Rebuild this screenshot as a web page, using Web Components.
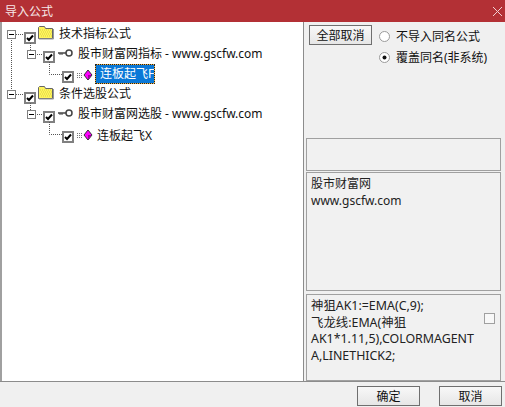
<!DOCTYPE html>
<html>
<head>
<meta charset="utf-8">
<style>
    html, body {
        margin: 0;
        background: #f0f0f0;
    }
    body {
        font: 12px "Noto Sans", "Noto Sans CJK SC", sans-serif;
        color: #111;
    }
</style>
</head>
<body>

<template id="import-dialog-temp">
    <style>
        :host {
            display: flex;
            flex-direction: column;
            width: 505px;
            height: 407px;
            overflow: hidden;
            background: #f0f0f0;
        }

        #main {
            display: flex;
            height: 359px;
            border-bottom: 1px solid #8c8c8c;
        }

        #tree {
            width: 301px;
            box-sizing: content-box;
            padding-top: 5px;
            background: #fff;
            border-left: 2px solid #a0a0a0;
            border-right: 1px solid #8c8c8c;
            overflow: hidden;
        }

        #side {
            display: flex;
            flex-direction: column;
            width: 195px;
            margin-left: 2px;
        }

        #options {
            display: flex;
            gap: 7px;
            height: 113px;
            padding: 3px 0 0 3px;
        }

        #radios {
            display: flex;
            flex-direction: column;
            margin-top: 1px;
            gap: 1px;
        }

        #footer {
            display: flex;
            gap: 19px;
            padding: 4px 0 0 357px;
        }
    </style>
    <window-title>导入公式</window-title>
    <div id="main">
        <div id="tree"><slot name="tree"></slot></div>
        <div id="side">
            <div id="options">
                <win-button>全部取消</win-button>
                <div id="radios">
                    <win-radio>不导入同名公式</win-radio>
                    <win-radio checked>覆盖同名(非系统)</win-radio>
                </div>
            </div>
            <slot name="side"></slot>
        </div>
    </div>
    <div id="footer">
        <win-button>确定</win-button>
        <win-button>取消</win-button>
    </div>
</template>

<template id="window-title-temp">
    <style>
        :host {
            display: flex;
            align-items: center;
            justify-content: space-between;
            flex: none;
            height: 22px;
            padding: 0 1px 0 5px;
            background: #b33035;
            color: #f6e8e8;
        }

        svg {
            display: block;
        }
    </style>
    <slot></slot>
    <svg width="13" height="13" viewBox="0 0 13 13">
        <path d="M3.500 .5 L12.500 9.500 M12.500 .5 L3.500 9.500" transform="translate(-1.500 1.500)" stroke="#f0d0d2" fill="none"/>
    </svg>
</template>

<template id="win-button-temp">
    <style>
        :host {
            display: flex;
            align-items: center;
            justify-content: center;
            box-sizing: border-box;
            width: 63px;
            height: 20px;
            border: 1px solid #6f6f6f;
            background: linear-gradient(#f8f8f8, #e6e6e6);
            color: #111;
        }
    </style>
    <slot></slot>
</template>

<template id="win-radio-temp">
    <style>
        :host {
            display: flex;
            align-items: center;
            gap: 6px;
            height: 20px;
        }

        svg {
            display: block;
            flex: none;
        }
    </style>
    <svg width="11" height="11" viewBox="0 0 11 11">
        <circle cx="5.500" cy="5.500" r="5" fill="#fff" stroke="#9a9a9a"/>
        <circle id="dot" cx="5.500" cy="5.500" r="2" fill="#111"/>
    </svg>
    <slot></slot>
</template>

<template id="text-panel-temp">
    <style>
        :host {
            display: flex;
            justify-content: space-between;
            box-sizing: border-box;
            border: 1px solid #a0a0a0;
            padding: 3px 4px;
            line-height: 16.5px;
            background: #f1f1f1;
            color: #222;
        }

        :host([box]) {
            font-size: 12.4px;
        }

        #scroll {
            flex: none;
            align-self: flex-start;
            width: 9px;
            height: 9px;
            margin: 15px 1px 0 0;
            border: 1px solid #a0a0a0;
            background: #f8f8f8;
        }

        :host(:not([box])) #scroll {
            display: none;
        }
    </style>
    <div><slot></slot></div>
    <div id="scroll"></div>
</template>

<script>
    function attachTemplate(host, id) {
        let root = host.attachShadow({ mode: 'open' });
        root.appendChild(document.querySelector(id).content.cloneNode(true));
        return root;
    }

    class IMPORT_DIALOG extends HTMLElement {
        constructor() {
            super();
            attachTemplate(this, '#import-dialog-temp');
        }
    }

    class WINDOW_TITLE extends HTMLElement {
        constructor() {
            super();
            attachTemplate(this, '#window-title-temp');
        }
    }

    class WIN_BUTTON extends HTMLElement {
        constructor() {
            super();
            attachTemplate(this, '#win-button-temp');
        }
    }

    class WIN_RADIO extends HTMLElement {
        constructor() {
            super();
            attachTemplate(this, '#win-radio-temp');
        }
        connectedCallback() {
            this.shadowRoot.querySelector('#dot').style.display = this.hasAttribute('checked') ? '' : 'none';
        }
    }

    class TEXT_PANEL extends HTMLElement {
        constructor() {
            super();
            attachTemplate(this, '#text-panel-temp');
        }
    }

    // gutter of a row: connectors, expander, checkbox and icon, in row coordinates
    const DOT = 'stroke="#555" stroke-dasharray="1 1" fill="none"';

    function expander(x) {
        return `<rect x="${x + .5}" y="3.500" width="8" height="8" fill="#fff" stroke="#808080"/>
                <path d="M${x + 2} 7.500h5" stroke="#000"/>`;
    }

    function checkbox(x, y) {
        return `<rect x="${x + 1}" y="${y + 1}" width="10" height="10" fill="#fff" stroke="#808080" stroke-width="2"/>
                <path d="M${x + 3} ${y + 6}l2 2 4-4.500" stroke="#000" stroke-width="2" fill="none"/>`;
    }

    const ICONS = {
        folder: x => `<path d="M${x + .5} 11.500v-11l1-1h5l1 2h7v10z" fill="#fff45c" stroke="#666"/>
                      <path d="M${x + 2} 3h12M${x + 3} 5h11M${x + 2} 7h12M${x + 3} 9h11" stroke="#d8cf45" stroke-dasharray="1 1"/>
                      <path d="M${x + 15.500} 2v10H${x + 1}" stroke="#999" fill="none"/>`,
        key: x => `<path d="M${x} 6h8" stroke="#444" stroke-width="1.500"/>
                   <path d="M${x + 2} 6v2M${x + 4} 6v2" stroke="#444"/>
                   <circle cx="${x + 11}" cy="6" r="3" fill="#fff" stroke="#444" stroke-width="1.500"/>`,
        formula: x => `<path d="M${x} 6.500h6M${x} 8.500h6M${x} 10.500h6" stroke="#777" stroke-dasharray="1 1"/>
                       <path d="M${x + 11} 3l4 5-4 5-4-5z" fill="#f0f" stroke="#333"/>
                       <path d="M${x + 11} 8l3.500 0-3.500 4.500z" fill="#a000a0"/>`
    };

    const LEVELS = {
        0: {
            width: 59, icon: 'folder', iconX: 38, textTop: 0,
            gutter: last => `<path d="M11.500 11v${last ? 0 : 52}M16 7.500h8" ${DOT}/>${expander(7)}${checkbox(24, 5)}`
        },
        1: {
            width: 78, icon: 'key', iconX: 58, textTop: 0,
            gutter: () => `<path d="M30.500 -4v8M35 7.500h8" ${DOT}/>${expander(27)}${checkbox(43, 4)}`
        },
        2: {
            width: 97, icon: 'formula', iconX: 77, textTop: 2,
            gutter: () => `<path d="M49.500 -5v12.500h13" ${DOT}/>${checkbox(62, 4)}`
        }
    };

    class TREE_ROW extends HTMLElement {
        connectedCallback() {
            if (this.shadowRoot) return;
            let lv = LEVELS[this.getAttribute('level')];
            let root = this.attachShadow({ mode: 'open' });
            root.innerHTML = `
                <style>
                    :host {
                        display: flex;
                        height: 20px;
                        line-height: 15px;
                        margin-left: -2px;
                    }
                    svg {
                        display: block;
                        flex: none;
                        overflow: visible;
                    }
                    #text {
                        margin-top: ${lv.textTop - 1}px;
                        white-space: nowrap;
                        height: 16px;
                    }
                    :host([selected]) #text {
                        box-sizing: border-box;
                        height: 20px;
                        margin: -3px 0 0 -2px;
                        padding: 2px 1px 0 5px;
                        line-height: 16px;
                        background: #0a78d7;
                        color: #fff;
                        box-shadow: inset 0 0 0 1px #f0b040;
                        outline: 1px dotted #222;
                        outline-offset: -1px;
                    }
                </style>
                <svg width="${lv.width}" height="20">${lv.gutter(this.hasAttribute('last'))}${ICONS[lv.icon](lv.iconX)}</svg>
                <div id="text"><slot></slot></div>`;
        }
    }

    customElements.define('window-title', WINDOW_TITLE);
    customElements.define('win-button', WIN_BUTTON);
    customElements.define('win-radio', WIN_RADIO);
    customElements.define('text-panel', TEXT_PANEL);
    customElements.define('tree-row', TREE_ROW);
    customElements.define('import-dialog', IMPORT_DIALOG);
</script>

<import-dialog>
    <tree-row slot="tree" level="0">技术指标公式</tree-row>
    <tree-row slot="tree" level="1">股市财富网指标 - www.gscfw.com</tree-row>
    <tree-row slot="tree" level="2" selected>连板起飞F</tree-row>
    <tree-row slot="tree" level="0" last>条件选股公式</tree-row>
    <tree-row slot="tree" level="1">股市财富网选股 - www.gscfw.com</tree-row>
    <tree-row slot="tree" level="2">连板起飞X</tree-row>
    <text-panel slot="side" style="height:33px"></text-panel>
    <text-panel slot="side" style="height:119px;margin-top:1px">股市财富网<br>www.gscfw.com</text-panel>
    <text-panel slot="side" box style="height:87px;margin-top:3px">神狙AK1:=EMA(C,9);<br>飞龙线:EMA(神狙<br>AK1*1.11,5),COLORMAGENT<br>A,LINETHICK2;</text-panel>
</import-dialog>

</body>
</html>
